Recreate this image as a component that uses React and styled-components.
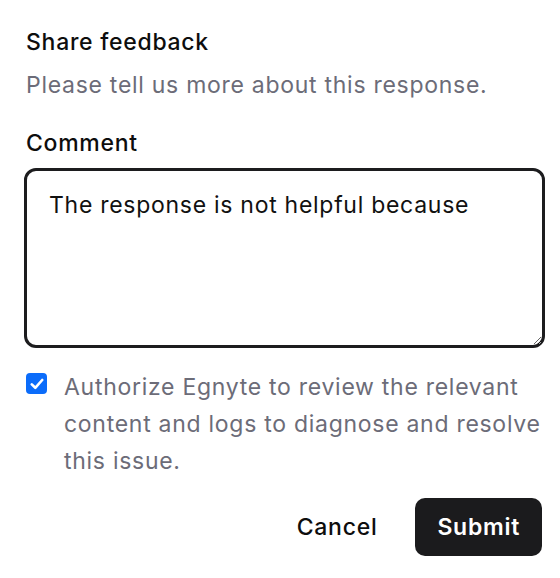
import React, { useState } from 'react';
import styled, { createGlobalStyle } from 'styled-components';

const GlobalStyle = createGlobalStyle`
  html, body {
    margin: 0;
    padding: 0;
    background: #ffffff;
  }
  body {
    font-family: Inter, "Noto Sans", "Liberation Sans", sans-serif;
    -webkit-font-smoothing: antialiased;
  }
`;

const Panel = styled.form`
  box-sizing: border-box;
  width: 560px;
  padding: 27px 15px 0 24px;
  display: flex;
  flex-direction: column;
  font-size: 23px;
  letter-spacing: 0.72px;
`;

const Title = styled.h2`
  margin: 0 0 0 2px;
  font-size: 23px;
  line-height: 30px;
  font-weight: 500;
  color: #0d0d0d;
`;

const Subtitle = styled.p`
  margin: 13px 0 0 2px;
  font-size: 23px;
  line-height: 30px;
  font-weight: 400;
  color: #6c6c78;
`;

const Label = styled.label`
  margin: 28px 0 0 2px;
  font-size: 23px;
  line-height: 30px;
  font-weight: 500;
  color: #0d0d0d;
`;

const TextArea = styled.textarea`
  box-sizing: border-box;
  margin-top: 10px;
  width: 100%;
  height: 180px;
  padding: 19px 22px;
  border: 3px solid #1c1c1e;
  border-radius: 12px;
  font-family: Inter, "Noto Sans", "Liberation Sans", sans-serif;
  font-size: 23px;
  letter-spacing: 0.72px;
  line-height: 30px;
  color: #111111;
  background: #ffffff;
  resize: vertical;
  outline: none;
`;

const ConsentRow = styled.label`
  margin-top: 20px;
  display: flex;
  align-items: flex-start;
  gap: 17px;
  padding-left: 2px;
`;

const CheckBox = styled.span`
  flex: none;
  margin-top: 5px;
  width: 21px;
  height: 21px;
  border-radius: 4px;
  background: ${p => (p.checked ? '#0b6cfa' : '#ffffff')};
  border: ${p => (p.checked ? 'none' : '2px solid #767676')};
  box-sizing: border-box;
  display: flex;
  align-items: center;
  justify-content: center;
`;

const HiddenInput = styled.input`
  position: absolute;
  opacity: 0;
  width: 0;
  height: 0;
`;

const ConsentText = styled.span`
  padding-top: 1px;
  font-size: 23px;
  line-height: 37px;
  color: #6c6c78;
`;

const Actions = styled.div`
  margin-top: 18px;
  display: flex;
  justify-content: flex-end;
  align-items: center;
  gap: 20px;
  padding-right: 3px;
`;

const Button = styled.button`
  height: 58px;
  padding: 0 ${p => (p.primary ? '22px' : '18px')};
  border: none;
  border-radius: 10px;
  background: ${p => (p.primary ? '#1b1b1d' : 'transparent')};
  color: ${p => (p.primary ? '#ffffff' : '#0d0d0d')};
  font-family: Inter, "Noto Sans", "Liberation Sans", sans-serif;
  font-size: 23px;
  letter-spacing: 0.72px;
  font-weight: ${p => (p.primary ? 600 : 500)};
  cursor: pointer;
`;

export default function App() {
  const [checked, setChecked] = useState(true);
  const [comment, setComment] = useState('The response is not helpful because');

  return (
    <>
      <GlobalStyle />
      <Panel onSubmit={e => e.preventDefault()}>
        <Title>Share feedback</Title>
        <Subtitle>Please tell us more about this response.</Subtitle>
        <Label htmlFor="comment">Comment</Label>
        <TextArea id="comment" value={comment} onChange={e => setComment(e.target.value)} />
        <ConsentRow>
          <HiddenInput type="checkbox" checked={checked} onChange={() => setChecked(!checked)} />
          <CheckBox checked={checked}>
            {checked && (
              <svg width="14" height="12" viewBox="0 0 14 12" fill="none">
                <path d="M1.8 6.4 L5.3 9.8 L12.2 2" stroke="#ffffff" strokeWidth="2.6" strokeLinecap="round" strokeLinejoin="round" />
              </svg>
            )}
          </CheckBox>
          <ConsentText>
            Authorize Egnyte to review the relevant content and logs to diagnose and resolve this issue.
          </ConsentText>
        </ConsentRow>
        <Actions>
          <Button type="button">Cancel</Button>
          <Button type="submit" primary>Submit</Button>
        </Actions>
      </Panel>
    </>
  );
}
